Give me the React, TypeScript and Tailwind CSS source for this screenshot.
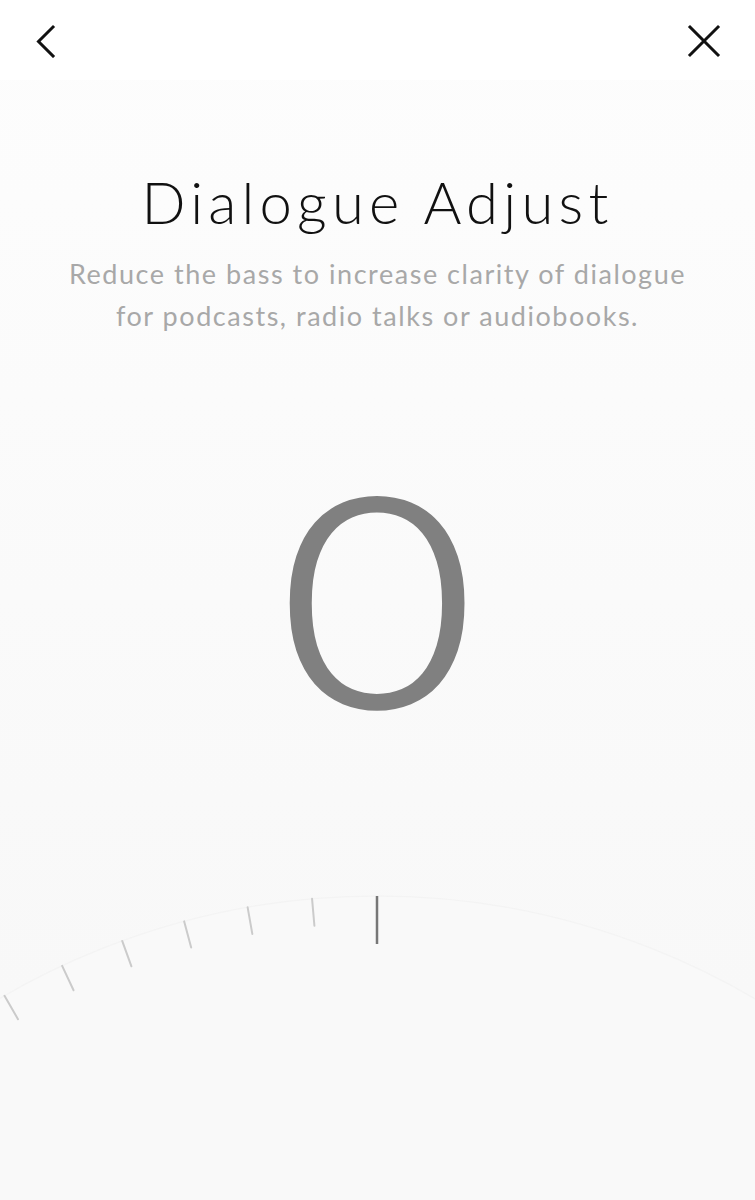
import React from 'react';

// Dial geometry: a large circle whose top edge carries the ticks.
const DIAL_W = 755;
const DIAL_H = 340;
const CX = 377;
const R = 745;
const CY = 36 + R; // top of the arc sits 36px into the dial strip

function tick(angleDeg: number, len: number) {
  const a = (angleDeg * Math.PI) / 180;
  const sx = Math.sin(a);
  const cy = -Math.cos(a);
  return {
    x1: CX + sx * R,
    y1: CY + cy * R,
    x2: CX + sx * (R - len),
    y2: CY + cy * (R - len),
  };
}

const minorAngles = [-5, -10, -15, -20, -25, -30, -35];

function Dial() {
  const center = tick(0, 48);
  return (
    <svg width={DIAL_W} height={DIAL_H} viewBox={`0 0 ${DIAL_W} ${DIAL_H}`} className="block">
      <circle cx={CX} cy={CY} r={R} fill="#f9f9f9" stroke="rgba(0,0,0,0.02)" strokeWidth={1.5} />
      {minorAngles.map((deg) => {
        const t = tick(deg, 27);
        return (
          <line
            key={deg}
            {...t}
            stroke="#cbcbcb"
            strokeWidth={2}
            strokeLinecap="round"
          />
        );
      })}
      <line {...center} stroke="#777777" strokeWidth={2.5} />
    </svg>
  );
}

export default function App() {
  return (
    <div className="flex h-[1200px] w-[755px] flex-col overflow-hidden bg-linear-to-b from-[#fdfdfd] to-[#f7f7f7] font-['Lato','Open_Sans',sans-serif]">
      <header className="flex h-20 shrink-0 items-start justify-between bg-white pl-[34px] pr-[33px] pt-[24px]">
        <button type="button" aria-label="Back" className="block">
          <svg width="24" height="34" viewBox="0 0 24 34" fill="none">
            <path d="M19 3 L4.5 17.5 L19 32" stroke="#111" strokeWidth="3" strokeLinecap="square" />
          </svg>
        </button>
        <button type="button" aria-label="Close" className="block">
          <svg width="36" height="34" viewBox="0 0 36 34" fill="none">
            <path d="M4 3 L32 31 M32 3 L4 31" stroke="#111" strokeWidth="3" strokeLinecap="square" />
          </svg>
        </button>
      </header>

      <main className="flex flex-col items-center">
        <h1 className="mt-[93px] text-[58px] font-light leading-none tracking-[0.09em] text-[#111]">
          Dialogue Adjust
        </h1>
        <p className="mt-[22px] text-center text-[27px] leading-[42px] tracking-[0.057em] text-[#a8a8a8]">
          Reduce the bass to increase clarity of dialogue
          <br />
          for podcasts, radio talks or audiobooks.
        </p>
        <div className="mt-[112px] h-[290px] scale-x-[1.15] text-[290px] font-light leading-none text-[#808080] [-webkit-text-stroke:5px_#808080]">
          0
        </div>
      </main>

      <div className="mt-auto shrink-0">
        <Dial />
      </div>
    </div>
  );
}
